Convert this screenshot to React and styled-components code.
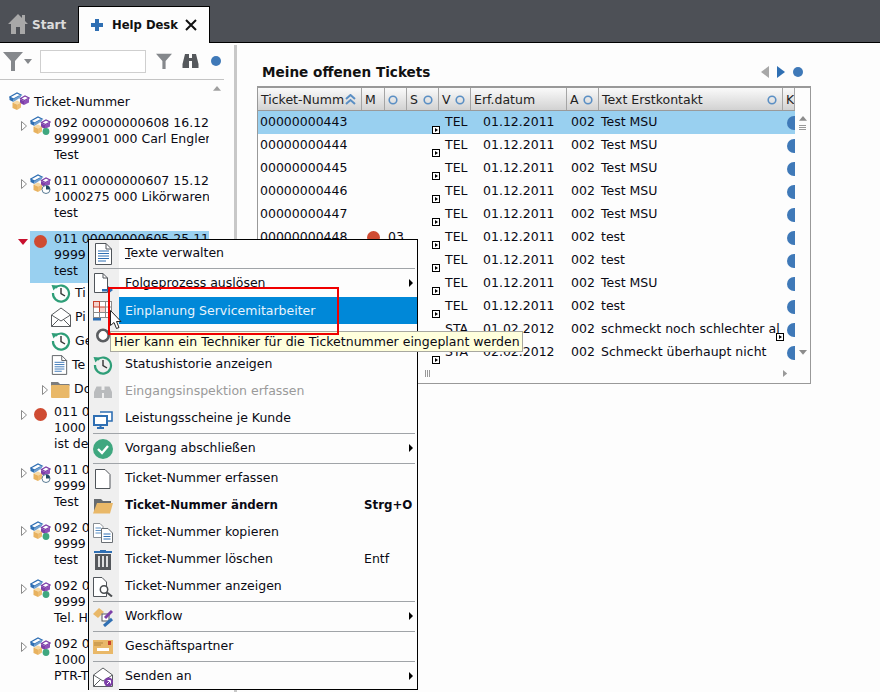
import React from "react";
import styled, { createGlobalStyle } from "styled-components";

const GlobalStyle = createGlobalStyle`
    html, body {
        margin: 0;
        padding: 0;
        background: #fdfdfd;
    }
    body {
        font-family: "DejaVu Sans", Verdana, sans-serif;
        font-size: 12.5px;
        color: #0a0a14;
    }
`;

const Page = styled.div`
    position: relative;
    width: 880px;
    height: 692px;
    overflow: hidden;
    background: #fdfdfd;
`;

/* top tabs */
const TabBar = styled.div`
    display: flex;
    align-items: flex-end;
    height: 42px;
    background: #4d5056;
    border-bottom: 1px solid #000;
`;

const StartTab = styled.div`
    display: flex;
    align-items: center;
    gap: 4px;
    width: 70px;
    height: 36px;
    padding-left: 8px;
    color: #dcdcdc;
    font-weight: 700;
    font-size: 12px;
`;

const StartLabel = styled.span`
    margin-top: 2px;
`;

const ActiveTab = styled.div`
    display: flex;
    align-items: center;
    box-sizing: border-box;
    width: 132px;
    height: 37px;
    margin-bottom: -1px;
    padding-left: 12px;
    background: #fdfdfd;
    border: 1px solid #000;
    border-bottom: none;
    font-weight: 700;
    font-size: 11.6px;
    color: #111;
`;

const TabLabel = styled.span`
    margin: 0 7px 0 9px;
`;

const Main = styled.div`
    display: flex;
    height: 649px;
`;

/* left tree */
const LeftPanel = styled.div`
    width: 224px;
    margin-right: 10px;
    flex-shrink: 0;
`;

const Toolbar = styled.div`
    display: flex;
    align-items: center;
    box-sizing: border-box;
    height: 37px;
    padding: 0 3px;
    border-bottom: 1px solid #c4c4c4;
`;

const FilterInput = styled.div`
    box-sizing: border-box;
    width: 106px;
    height: 23px;
    margin: 0 10px 0 8px;
    background: #fff;
    border: 1px solid #cfcfcf;
`;

const ToolGap = styled.span`
    display: inline-flex;
    margin-left: ${(p) => p.$left || 0}px;
`;

const Dot = styled.span`
    display: inline-block;
    flex-shrink: 0;
    width: ${(p) => p.$size || 10}px;
    height: ${(p) => p.$size || 10}px;
    border-radius: 50%;
    background: ${(p) => p.$color || "#3f79b8"};
`;

const TreeWrap = styled.div`
    display: flex;
    height: 612px;
`;

const Tree = styled.div`
    width: 209px;
    overflow: hidden;
    padding-top: 14px;
    line-height: 16px;
    white-space: nowrap;
`;

const TreeRail = styled.div`
    display: flex;
    justify-content: center;
    width: 15px;
    padding-top: 6px;
`;

const RootRow = styled.div`
    display: flex;
    align-items: center;
    gap: 4px;
    height: 16px;
    padding-left: 9px;
    margin-bottom: 5px;
`;

const TreeNode = styled.div`
    display: flex;
    align-items: flex-start;
    height: ${(p) => (p.$open ? "52px" : "48px")};
    margin-bottom: ${(p) => (p.$open ? "0" : "10px")};
`;

const Toggle = styled.span`
    display: flex;
    justify-content: flex-end;
    width: 30px;
    flex-shrink: 0;
    padding: ${(p) => (p.$open ? "8px 2px 0 0" : "6px 3px 0 0")};
    box-sizing: border-box;
`;

const NodeBody = styled.div`
    display: flex;
    flex: 1;
    height: 100%;
    min-width: 0;
    background: ${(p) => (p.$selected ? "#99d0f0" : "transparent")};
`;

const NodeIcon = styled.span`
    display: flex;
    width: 24px;
    flex-shrink: 0;
    padding-top: 1px;
`;

const NodeDot = styled(Dot)`
    margin: 3px 0 0 4px;
`;

const ChildList = styled.div`
    margin: -2px 0 3px;
`;

const ChildRow = styled.div`
    display: flex;
    align-items: center;
    gap: 4px;
    height: 24px;
    padding-left: 51px;
    position: relative;
`;

const ChildToggle = styled.span`
    position: absolute;
    left: 42px;
    top: 8px;
    display: flex;
`;

const Splitter = styled.div`
    width: 3px;
    margin-top: 2px;
    background: #c8c8c8;
`;

/* right side */
const RightPanel = styled.div`
    flex: 1;
    padding-left: 20px;
`;

const TitleRow = styled.div`
    display: flex;
    align-items: center;
    justify-content: space-between;
    box-sizing: border-box;
    width: 546px;
    height: 16px;
    margin: 21px 0 6px 0;
    padding-left: 5px;
`;

const Title = styled.h2`
    margin: 0;
    font-size: 13.6px;
    font-weight: 700;
    color: #111;
`;

const Pager = styled.div`
    display: flex;
    align-items: center;
    gap: 8px;
`;

const TableBox = styled.div`
    display: flex;
    box-sizing: border-box;
    width: 554px;
    height: 298px;
    background: #fdfdfd;
    border: 1px solid #999;
    border-top-width: 2px;
`;

const TableClip = styled.div`
    width: 537px;
    overflow: hidden;
`;

const TableScroll = styled.div`
    display: flex;
    flex-direction: column;
    align-items: center;
    justify-content: space-between;
    width: 15px;
    height: 270px;
    padding: 28px 0 0;
    box-sizing: border-box;
`;

const GRID = "104px 23px 22px 32px 32px 96px 32px 184px 12px";

const HeadRow = styled.div`
    display: grid;
    grid-template-columns: ${GRID};
    height: 22px;
    background: linear-gradient(#fafafa, #d2d2d2);
    border-bottom: 1px solid #9a9a9a;
`;

const HeadCell = styled.div`
    display: flex;
    align-items: center;
    justify-content: space-between;
    box-sizing: border-box;
    padding: 1px 5px 0 3px;
    border-right: 1px solid #a5a5a5;
    white-space: nowrap;
    overflow: hidden;
    color: #222;
`;

const Row = styled.div`
    display: grid;
    grid-template-columns: ${GRID};
    height: 23px;
    align-items: center;
    background: ${(p) => (p.$selected ? "#99d0f0" : "transparent")};
`;

const Cell = styled.div`
    position: relative;
    display: flex;
    align-items: center;
    box-sizing: border-box;
    height: 23px;
    padding-left: ${(p) => p.$pad || 0}px;
    padding-bottom: 2px;
    white-space: nowrap;
    min-width: 0;
`;

const TextCell = styled(Cell)`
    overflow: hidden;
`;

const Marker = styled.span`
    position: absolute;
    right: ${(p) => p.$right ?? -1}px;
    bottom: 0;
    box-sizing: border-box;
    width: 8px;
    height: 8px;
    background: #fff;
    border: 1px solid #000;
    &::after {
        content: "";
        position: absolute;
        left: 2px;
        top: 1px;
        border-left: 3px solid #000;
        border-top: 2px solid transparent;
        border-bottom: 2px solid transparent;
    }
`;

const RowDot = styled(Dot)`
    margin-top: 2px;
`;

const KDot = styled(Dot)`
    margin: 3px 0 0 4px;
`;

const HScroll = styled.div`
    display: flex;
    align-items: center;
    justify-content: space-between;
    height: 19px;
    padding: 0 5px 0 167px;
`;

const Grip = styled.span`
    display: block;
    width: 5px;
    height: 7px;
    background: repeating-linear-gradient(90deg, #999 0 1px, transparent 1px 2px);
`;

const VGrip = styled.span`
    display: block;
    width: 7px;
    height: 5px;
    margin-top: -219px;
    background: repeating-linear-gradient(0deg, #999 0 1px, transparent 1px 2px);
`;

/* context menu */
const Menu = styled.div`
    position: absolute;
    left: 88px;
    top: 239px;
    box-sizing: border-box;
    width: 330px;
    height: 451px;
    background: #fdfdfd;
    border: 1px solid #000;
`;

const MenuItem = styled.div`
    display: flex;
    align-items: center;
    height: 27px;
    font-weight: ${(p) => (p.$bold ? 700 : 400)};
    font-size: ${(p) => (p.$bold ? "11.8px" : "inherit")};
    color: ${(p) => (p.$disabled ? "#9a9a9a" : "#0a0a14")};
`;

const Gutter = styled.span`
    display: flex;
    align-items: center;
    justify-content: center;
    box-sizing: border-box;
    width: 30px;
    height: 100%;
    flex-shrink: 0;
    background: #efefef;
    padding-right: 2px;
`;

const ItemText = styled.span`
    flex: 1;
    box-sizing: border-box;
    padding: 0 0 ${(p) => (p.$hot ? "0" : "2px")} 6px;
    height: 100%;
    display: flex;
    align-items: center;
    background: ${(p) => (p.$hot ? "#0088d8" : "transparent")};
    color: ${(p) => (p.$hot ? "#e8f4fc" : "inherit")};
    white-space: nowrap;
`;

const Label = styled.span`
    flex: 1;
`;

const Shortcut = styled.span`
    width: 53px;
`;

const SubArrow = styled.span`
    margin-right: 4px;
    border-left: 4px solid #000;
    border-top: 4px solid transparent;
    border-bottom: 4px solid transparent;
`;

const Sep = styled.div`
    display: flex;
    align-items: center;
    height: 3px;
    background: linear-gradient(90deg, #efefef 0 30px, transparent 30px);
    &::after {
        content: "";
        display: block;
        width: 322px;
        height: 1px;
        margin-left: 4px;
        background: #a0a4a8;
    }
`;

const Tooltip = styled.div`
    position: absolute;
    left: 110px;
    top: 331px;
    box-sizing: border-box;
    width: 413px;
    height: 21px;
    padding: 1px 0 0 3px;
    line-height: 18px;
    background: #ffffdc;
    border: 1px solid #a8a8a0;
    white-space: nowrap;
`;

const RedFrame = styled.div`
    position: absolute;
    left: 108px;
    top: 287px;
    box-sizing: border-box;
    width: 231px;
    height: 48px;
    border: 2px solid #f00000;
`;

const CursorWrap = styled.span`
    position: absolute;
    left: 110px;
    top: 310px;
    display: flex;
`;

/* drawings */
const Svg = ({ w = 20, h = 20, vb, children }) => (
    <svg width={w} height={h} viewBox={vb || `0 0 ${w} ${h}`} style={{ display: "block", flexShrink: 0 }}>
        {children}
    </svg>
);

const Cubes = ({ badge }) => (
    <Svg w={21} h={20}>
        <path d="M0.7 5 L8 1 L12 3 L4.5 7 Z" fill="#fff" stroke="#2f6fb3" strokeWidth="1.3" />
        <path d="M0.5 5 L4.5 7 V10 L0.5 8 Z" fill="#2f6fb3" />
        <path d="M4.5 7 L12 3 V5 L4.5 10 Z" fill="#6f9fd0" />
        <path d="M11.5 6.5 L16 4 L20 6 L15.5 8.5 Z" fill="#fff" stroke="#7d3fa8" strokeWidth="1.2" />
        <path d="M11 7 L15 9 V13 L11 11 Z" fill="#7d3fa8" />
        <path d="M15 9 L20 6.5 V10.5 L15 13 Z" fill="#8f52b8" />
        <path d="M3.5 10.5 L8 8.5 L11 10 V11 L8 12.5 Z" fill="#f6d9a4" />
        <path d="M3.5 10.5 L8 12.5 V18 L3.5 16 Z" fill="#e8b25f" />
        <path d="M8 12.5 L12 10.5 V15.5 L8 18 Z" fill="#edbd72" />
        {badge === "green" && <circle cx="16" cy="15.5" r="3.4" fill="#3fa77f" />}
        {badge === "clock" && (
            <g>
                <circle cx="16" cy="15.5" r="4" fill="#fff" stroke="#5a7c94" strokeWidth="1" />
                <path d="M16 11.5 A4 4 0 0 1 20 15.5 H16 Z" fill="#1f4a62" />
            </g>
        )}
    </Svg>
);

const Funnel = ({ size = 20 }) => (
    <Svg w={size} h={size} vb="0 0 20 20">
        <path d="M0 1 H20 L12 10 V20 H8 V10 Z" fill="#85888c" />
    </Svg>
);

const Binoculars = () => (
    <Svg w={17} h={16} vb="0 0 17 16">
        <path d="M3 1 H7 V5 H10 V1 H14 L16.5 11 V15 H10 V8 H7 V15 H0.5 V11 Z" fill="#55585c" />
    </Svg>
);

const WideBinoculars = () => (
    <Svg w={20} h={14}>
        <path d="M1 13 V7 L3.5 1.5 H8.5 V5 H11.5 V1.5 H16.5 L19 7 V13 H11 V8 H9 V13 Z" fill="#b9bbbd" />
    </Svg>
);

const Ring = () => (
    <Svg w={10} h={10}>
        <circle cx="5" cy="5" r="3.8" fill="none" stroke="#5b8fc4" strokeWidth="1.6" />
    </Svg>
);

const Triangle = ({ color = "#8c8c8c", dir = "up", size = 10 }) => {
    const d = {
        up: "M0 6 L5 0 L10 6 Z",
        down: "M0 0 H10 L5 6 Z",
        right: "M0 0 L6 5 L0 10 Z",
    }[dir];
    return (
        <Svg w={size} h={size} vb="0 0 10 10">
            <path d={d} fill={color} />
        </Svg>
    );
};

const OpenArrow = () => (
    <Svg w={6} h={10}>
        <path d="M0.5 0.5 L5.5 5 L0.5 9.5 Z" fill="#fff" stroke="#8a8a8a" />
    </Svg>
);

const DocLines = ({ w = 19, h = 22 }) => (
    <Svg w={w} h={h} vb="0 0 19 22">
        <path d="M1.5 0.5 H12 L17.5 6 V21.5 H1.5 Z" fill="#fff" stroke="#50555a" />
        <path d="M12 0.5 V6 H17.5" fill="none" stroke="#50555a" />
        <path d="M4 8 H15 M4 10.5 H15 M4 13 H15 M4 15.5 H15 M4 18 H12" stroke="#2f6fb3" strokeWidth="1" />
    </Svg>
);

const DocForward = () => (
    <Svg w={20} h={22}>
        <path d="M1.5 0.5 H10 L14.5 5 V19.5 H1.5 Z" fill="#fff" stroke="#50555a" />
        <path d="M10 0.5 V5 H14.5" fill="none" stroke="#50555a" />
        <path d="M9 16 H15 V13 L20 17 L15 21 V18.5 H9 Z" fill="#2f6fb3" />
    </Svg>
);

const RedGrid = () => (
    <Svg w={20} h={20}>
        <rect x="0.5" y="0.5" width="18" height="16" fill="#fff" stroke="#8a8a8a" />
        <rect x="0.5" y="0.5" width="6" height="5.5" fill="#f5d2cc" stroke="#c8402c" />
        <rect x="6.5" y="6" width="6" height="5.5" fill="#f5d2cc" stroke="#c8402c" />
        <path d="M0.5 11.5 H18.5 M12.5 0.5 V17 M6.5 11.5 V17 M12.5 6 H18.5" stroke="#8a8a8a" fill="none" />
        <rect x="0" y="17" width="8" height="2.5" fill="#2f6fb3" />
    </Svg>
);

const Magnifier = () => (
    <Svg w={20} h={20}>
        <circle cx="10" cy="7.5" r="5.7" fill="#fff" stroke="#5a5d60" strokeWidth="2.6" />
    </Svg>
);

const HistoryClock = ({ size = 20 }) => (
    <Svg w={size} h={size} vb="0 0 20 20">
        <path d="M4.2 5 A8 8 0 1 1 2 10" fill="none" stroke="#2e9e78" strokeWidth="2.2" />
        <path d="M0.5 2 L6.5 2.5 L2.5 7.5 Z" fill="#2e9e78" />
        <path d="M10 5 V10.5 L14 13" fill="none" stroke="#333" strokeWidth="1.4" />
    </Svg>
);

const Envelope = () => (
    <Svg w={20} h={20}>
        <path d="M0.5 8 L10 1 L19.5 8 V19.5 H0.5 Z" fill="#fff" stroke="#5a5d60" />
        <path d="M0.5 8 L10 14 L19.5 8 M0.5 19.5 L8 12 M19.5 19.5 L12 12" fill="none" stroke="#5a5d60" />
    </Svg>
);

const Folder = () => (
    <Svg w={19} h={17}>
        <path d="M0 1 H7 L9 3 H18.5 V5 H0 Z" fill="#7d7d7d" />
        <rect x="0" y="4" width="18.5" height="13" rx="1" fill="#e9b868" />
    </Svg>
);

const Monitors = () => (
    <Svg w={20} h={20}>
        <path d="M7 3 H19 V12 H15" fill="#fff" stroke="#2f6fb3" strokeWidth="1.6" />
        <rect x="1" y="7" width="13" height="9" fill="#fff" stroke="#2f6fb3" strokeWidth="2" />
        <path d="M4 19 H11 M7.5 16 V19" stroke="#2f6fb3" strokeWidth="2" />
    </Svg>
);

const CheckCircle = () => (
    <Svg w={20} h={20}>
        <circle cx="10" cy="10" r="10" fill="#3fa77f" />
        <path d="M5 10 L9 14 L15 7" fill="none" stroke="#fff" strokeWidth="2.4" />
    </Svg>
);

const BlankPage = () => (
    <Svg w={16} h={20}>
        <path d="M0.5 0.5 H10 L15 5.5 V19.5 H0.5 Z" fill="#fff" stroke="#50555a" />
    </Svg>
);

const OpenFolder = () => (
    <Svg w={20} h={17}>
        <path d="M1 16 V2 H8 L10 4 H18 V7 H5 Z" fill="#666a6e" />
        <path d="M4 6 H20 L17 16.5 H0 Z" fill="#e9b868" />
    </Svg>
);

const CopyDocs = () => (
    <Svg w={20} h={20}>
        <path d="M0.5 0.5 H7 L10 3.5 V14.5 H0.5 Z" fill="#fff" stroke="#8a8f94" />
        <path d="M2.5 5 H8 M2.5 7.5 H8 M2.5 10 H8" stroke="#5b8fc4" />
        <path d="M8.5 5.5 H15 L19.5 10 V19.5 H8.5 Z" fill="#fff" stroke="#6a6f74" />
        <path d="M10.5 11 H17.5 M10.5 13.5 H17.5 M10.5 16 H17.5" stroke="#2f6fb3" />
    </Svg>
);

const Trash = () => (
    <Svg w={18} h={20}>
        <path d="M6 0 H12 V1 H18 V3 H0 V1 H6 Z" fill="#2f6fb3" />
        <path d="M1 4 H17 V20 H1 Z" fill="#55585c" />
        <path d="M5 6 V17 M9 6 V17 M13 6 V17" stroke="#fff" strokeWidth="1.6" />
    </Svg>
);

const DocSearch = () => (
    <Svg w={20} h={20}>
        <path d="M0.5 0.5 H9 L13.5 5 V19.5 H0.5 Z" fill="#fff" stroke="#50555a" />
        <circle cx="11" cy="12.5" r="3.7" fill="#fff" stroke="#4a4d50" strokeWidth="1.5" />
        <path d="M14 15.5 L19 19.5" stroke="#4a4d50" strokeWidth="2" />
    </Svg>
);

const WorkflowIcon = () => (
    <Svg w={20} h={20}>
        <path d="M0 7 L6 1 L11 5 L5 11 Z" fill="#e9b868" />
        <rect x="9" y="7" width="7" height="7" fill="#fff" stroke="#50555a" />
        <path d="M12 11 L19 4" stroke="#7d3fa8" strokeWidth="3" />
        <path d="M11 19 L19 12" stroke="#2f6fb3" strokeWidth="3" />
    </Svg>
);

const PartnerCard = () => (
    <Svg w={20} h={14}>
        <rect width="20" height="14" fill="#e9b868" />
        <rect x="15" y="1" width="3" height="4" fill="#c8402c" />
        <rect x="4" y="8" width="12" height="3" fill="#fff" />
        <path d="M1 3 H10 M1 5 H8" stroke="#b5863f" />
    </Svg>
);

const SendMail = () => (
    <Svg w={20} h={20}>
        <path d="M0.5 8 L10 1 L19.5 8 V19.5 H0.5 Z" fill="#fff" stroke="#5a5d60" />
        <path d="M0.5 8 L10 14 L19.5 8 M0.5 19.5 L8 12" fill="none" stroke="#5a5d60" />
        <circle cx="15.5" cy="15" r="4.5" fill="#7d3fa8" />
        <path d="M14 17 L17 14 M14.5 13.5 H17.5 V16.5" stroke="#fff" fill="none" />
    </Svg>
);

const Cursor = () => (
    <Svg w={12} h={20}>
        <path d="M0.5 0.5 V15.5 L4 12.5 L6.5 18.5 L9 17.5 L6.5 11.5 H11 Z" fill="#fff" stroke="#222" />
    </Svg>
);

const nodes = [
    { badge: "green", lines: ["092 00000000608 16.12", "9999001 000 Carl Engler", "Test"] },
    { badge: "clock", lines: ["011 00000000607 15.12", "1000275 000 Likörwaren", "test"] },
];

const lowerNodes = [
    { red: true, lines: ["011 0", "1000", "ist de"] },
    { badge: "clock", lines: ["011 0", "9999", "Test"] },
    { badge: "green", lines: ["092 0", "9999", "test"] },
    { badge: "green", lines: ["092 0", "9999", "Tel. H"] },
    { badge: "green", lines: ["092 0", "1000", "PTR-T"] },
];

const head = [
    ["Ticket-Numm", "sort"],
    ["M", null],
    ["", "ring"],
    ["S", "ring"],
    ["V", "ring"],
    ["Erf.datum", null],
    ["A", "ring"],
    ["Text Erstkontakt", "ring"],
    ["K", null],
];

const rows = [
    ["00000000443", "TEL", "01.12.2011", "Test MSU"],
    ["00000000444", "TEL", "01.12.2011", "Test MSU"],
    ["00000000445", "TEL", "01.12.2011", "Test MSU"],
    ["00000000446", "TEL", "01.12.2011", "Test MSU"],
    ["00000000447", "TEL", "01.12.2011", "Test MSU"],
    ["00000000448", "TEL", "01.12.2011", "test"],
    ["", "TEL", "01.12.2011", "test"],
    ["", "TEL", "01.12.2011", "Test MSU"],
    ["", "TEL", "01.12.2011", "test"],
    ["", "STA", "01.02.2012", "schmeckt noch schlechter al"],
    ["", "STA", "02.02.2012", "Schmeckt überhaupt nicht"],
];

const children = [
    [<HistoryClock key="c" />, "Ti"],
    [<Envelope key="e" />, "Pi"],
    [<HistoryClock key="c" />, "Ge"],
    [<DocLines key="d" w={17} h={20} />, "Te"],
    [<Folder key="f" />, "Do"],
];

const menu = [
    { icon: <DocLines />, text: "Texte verwalten", accel: true },
    "sep",
    { icon: <DocForward />, text: "Folgeprozess auslösen", sub: true },
    { icon: <RedGrid />, text: "Einplanung Servicemitarbeiter", hot: true },
    { icon: <Magnifier />, text: "" },
    { icon: <HistoryClock />, text: "Statushistorie anzeigen" },
    { icon: <WideBinoculars />, text: "Eingangsinspektion erfassen", disabled: true },
    { icon: <Monitors />, text: "Leistungsscheine je Kunde" },
    "sep",
    { icon: <CheckCircle />, text: "Vorgang abschließen", sub: true },
    "sep",
    { icon: <BlankPage />, text: "Ticket-Nummer erfassen" },
    { icon: <OpenFolder />, text: "Ticket-Nummer ändern", bold: true, key: "Strg+O" },
    { icon: <CopyDocs />, text: "Ticket-Nummer kopieren" },
    { icon: <Trash />, text: "Ticket-Nummer löschen", key: "Entf" },
    { icon: <DocSearch />, text: "Ticket-Nummer anzeigen" },
    "sep",
    { icon: <WorkflowIcon />, text: "Workflow", sub: true },
    "sep",
    { icon: <PartnerCard />, text: "Geschäftspartner" },
    "sep",
    { icon: <SendMail />, text: "Senden an", sub: true },
];

const NodeLines = ({ lines }) => (
    <div>
        {lines.map((line) => (
            <div key={line}>{line}</div>
        ))}
    </div>
);

const App = () => {
    return (
        <Page>
            <GlobalStyle />
            <TabBar>
                <StartTab>
                    <Svg w={20} h={20}>
                        <path d="M10 0 L14 4 V1 H17 V7 L20 10 H17 V20 H12 V13 H8 V20 H3 V10 H0 Z" fill="#a8a8a8" />
                    </Svg>
                    <StartLabel>Start</StartLabel>
                </StartTab>
                <ActiveTab>
                    <Svg w={12} h={12}>
                        <path d="M4 0 H8 V4 H12 V8 H8 V12 H4 V8 H0 V4 H4 Z" fill="#2f6fb3" />
                    </Svg>
                    <TabLabel>Help Desk</TabLabel>
                    <Svg w={12} h={12}>
                        <path d="M1 1 L11 11 M11 1 L1 11" stroke="#111" strokeWidth="2" />
                    </Svg>
                </ActiveTab>
            </TabBar>
            <Main>
                <LeftPanel>
                    <Toolbar>
                        <Funnel />
                        <ToolGap $left={1}>
                            <Svg w={8} h={5}>
                                <path d="M0 0 H8 L4 5 Z" fill="#85888c" />
                            </Svg>
                        </ToolGap>
                        <FilterInput />
                        <Funnel size={16} />
                        <ToolGap $left={10}>
                            <Binoculars />
                        </ToolGap>
                        <ToolGap $left={12}>
                            <Dot />
                        </ToolGap>
                    </Toolbar>
                    <TreeWrap>
                        <Tree>
                            <RootRow>
                                <Cubes />
                                Ticket-Nummer
                            </RootRow>
                            {nodes.map((node) => (
                                <TreeNode key={node.lines[0]}>
                                    <Toggle>
                                        <OpenArrow />
                                    </Toggle>
                                    <NodeBody>
                                        <NodeIcon>
                                            <Cubes badge={node.badge} />
                                        </NodeIcon>
                                        <NodeLines lines={node.lines} />
                                    </NodeBody>
                                </TreeNode>
                            ))}
                            <TreeNode $open>
                                <Toggle $open>
                                    <Svg w={10} h={6}>
                                        <path d="M0 0 H10 L5 6 Z" fill="#c8102e" />
                                    </Svg>
                                </Toggle>
                                <NodeBody $selected>
                                    <NodeIcon>
                                        <NodeDot $size={13} $color="#cf4b32" />
                                    </NodeIcon>
                                    <NodeLines lines={["011 00000000605 25.11", "9999", "test"]} />
                                </NodeBody>
                            </TreeNode>
                            <ChildList>
                                {children.map(([icon, label], i) => (
                                    <ChildRow key={label}>
                                        {i === 4 && (
                                            <ChildToggle>
                                                <OpenArrow />
                                            </ChildToggle>
                                        )}
                                        {icon}
                                        {label}
                                    </ChildRow>
                                ))}
                            </ChildList>
                            {lowerNodes.map((node, i) => (
                                <TreeNode key={i}>
                                    <Toggle>
                                        <OpenArrow />
                                    </Toggle>
                                    <NodeBody>
                                        <NodeIcon>
                                            {node.red ? <NodeDot $size={13} $color="#cf4b32" /> : <Cubes badge={node.badge} />}
                                        </NodeIcon>
                                        <NodeLines lines={node.lines} />
                                    </NodeBody>
                                </TreeNode>
                            ))}
                        </Tree>
                        <TreeRail>
                            <Triangle color="#a0a0a0" size={8} />
                        </TreeRail>
                    </TreeWrap>
                </LeftPanel>
                <Splitter />
                <RightPanel>
                    <TitleRow>
                        <Title>Meine offenen Tickets</Title>
                        <Pager>
                            <Svg w={8} h={12}>
                                <path d="M8 0 V12 L0 6 Z" fill="#a8a8a8" />
                            </Svg>
                            <Svg w={8} h={12}>
                                <path d="M0 0 V12 L8 6 Z" fill="#2f6fb3" />
                            </Svg>
                            <Dot />
                        </Pager>
                    </TitleRow>
                    <TableBox>
                        <div>
                            <TableClip>
                                <HeadRow>
                                    {head.map(([label, kind], i) => (
                                        <HeadCell key={i}>
                                            {label}
                                            {kind === "ring" && <Ring />}
                                            {kind === "sort" && (
                                                <Svg w={11} h={11}>
                                                    <path d="M1 5 L5.5 1 L10 5 M1 10 L5.5 6 L10 10" fill="none" stroke="#5b8fc4" strokeWidth="2" />
                                                </Svg>
                                            )}
                                        </HeadCell>
                                    ))}
                                </HeadRow>
                                {rows.map((row, i) => (
                                    <Row key={i} $selected={i === 0}>
                                        <Cell $pad={2}>{row[0]}</Cell>
                                        <Cell $pad={5}>{i === 5 && <RowDot $size={13} $color="#cf4b32" />}</Cell>
                                        <Cell $pad={3}>{i === 5 && "03"}</Cell>
                                        <Cell>
                                            <Marker />
                                        </Cell>
                                        <Cell $pad={6}>{row[1]}</Cell>
                                        <Cell $pad={12}>{row[2]}</Cell>
                                        <Cell $pad={4}>002</Cell>
                                        <TextCell $pad={2}>{row[3]}</TextCell>
                                        <Cell>
                                            {i === 9 && <Marker $right={11} />}
                                            <KDot $size={14} />
                                        </Cell>
                                    </Row>
                                ))}
                            </TableClip>
                            <HScroll>
                                <Grip />
                                <Triangle dir="right" color="#9a9a9a" size={7} />
                            </HScroll>
                        </div>
                        <TableScroll>
                            <Triangle color="#8c8c8c" size={8} />
                            <VGrip />
                            <Triangle dir="down" color="#8c8c8c" size={8} />
                        </TableScroll>
                    </TableBox>
                </RightPanel>
            </Main>
            <Menu>
                {menu.map((item, i) =>
                    item === "sep" ? (
                        <Sep key={i} />
                    ) : (
                        <MenuItem key={i} $bold={item.bold} $disabled={item.disabled}>
                            <Gutter>{item.icon}</Gutter>
                            <ItemText $hot={item.hot}>
                                <Label>
                                    {item.accel ? (
                                        <>
                                            <u>T</u>exte verwalten
                                        </>
                                    ) : (
                                        item.text
                                    )}
                                </Label>
                                {item.key && <Shortcut>{item.key}</Shortcut>}
                                {item.sub && <SubArrow />}
                            </ItemText>
                        </MenuItem>
                    )
                )}
            </Menu>
            <Tooltip>Hier kann ein Techniker für die Ticketnummer eingeplant werden</Tooltip>
            <RedFrame />
            <CursorWrap>
                <Cursor />
            </CursorWrap>
        </Page>
    );
};

export default App;
